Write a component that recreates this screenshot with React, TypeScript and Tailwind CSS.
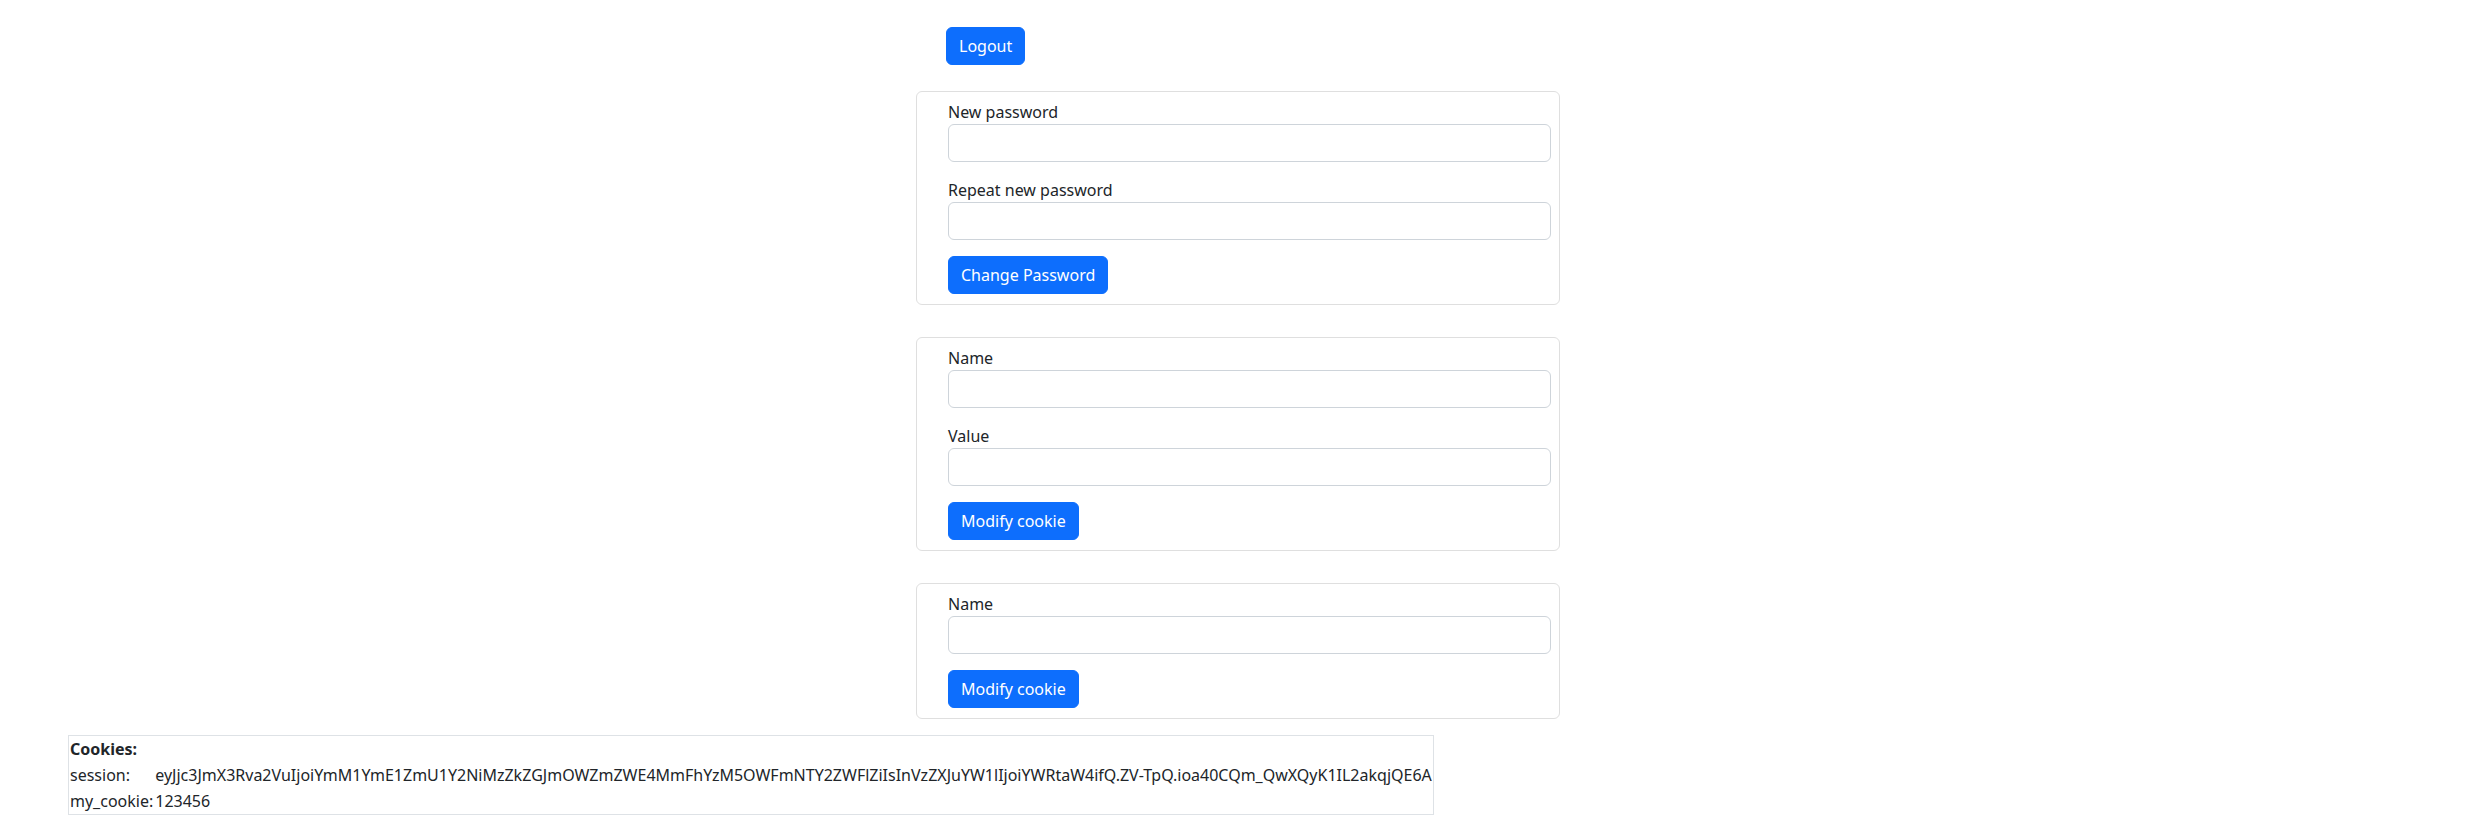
import React, { useState } from "react";

const SESSION_VALUE =
    "eyJjc3JmX3Rva2VuIjoiYmM1YmE1ZmU1Y2NiMzZkZGJmOWZmZWE4MmFhYzM5OWFmNTY2ZWFlZiIsInVzZXJuYW1lIjoiYWRtaW4ifQ.ZV-TpQ.ioa40CQm_QwXQyK1IL2akqjQE6A";

const Field: React.FC<{ label: string; type?: string; last?: boolean }> = ({ label, type = "text", last }) => {
    const [value, setValue] = useState("");
    return (
        <div className={last ? "" : "mb-4"}>
            <label className="block h-6 leading-6 text-[16px] text-[#212529]">{label}</label>
            <input
                type={type}
                value={value}
                onChange={(e) => setValue(e.target.value)}
                className="block w-full h-[38px] px-3 rounded-[6px] border border-[#ced4da] bg-white text-[16px] leading-6 text-[#212529] outline-none"
            />
        </div>
    );
};

const PrimaryButton: React.FC<{ children: React.ReactNode }> = ({ children }) => (
    <button className="h-[38px] px-3 rounded-[6px] border border-[#0d6efd] bg-[#0d6efd] text-white text-[16px] leading-6 hover:bg-[#0b5ed7]">
        {children}
    </button>
);

const Card: React.FC<{ children: React.ReactNode }> = ({ children }) => (
    <form
        onSubmit={(e) => e.preventDefault()}
        className="w-[644px] rounded-[6px] border border-[#dfdfdf] bg-white pt-[8px] pb-[10px] pl-[31px] pr-[8px]"
    >
        {children}
    </form>
);

export default function App() {
    return (
        <div className="min-h-screen bg-white text-[#212529] font-['Noto_Sans',sans-serif] text-[16px] leading-6">
            <div className="mx-auto w-[647px] pl-[3px] pt-[27px]">
                <div className="pl-[30px]">
                    <PrimaryButton>Logout</PrimaryButton>
                </div>

                <div className="mt-[26px] flex flex-col gap-8">
                    <Card>
                        <Field label="New password" type="password" />
                        <Field label="Repeat new password" type="password" last />
                        <div className="mt-4">
                            <PrimaryButton>Change Password</PrimaryButton>
                        </div>
                    </Card>

                    <Card>
                        <Field label="Name" />
                        <Field label="Value" last />
                        <div className="mt-4">
                            <PrimaryButton>Modify cookie</PrimaryButton>
                        </div>
                    </Card>

                    <Card>
                        <Field label="Name" last />
                        <div className="mt-4">
                            <PrimaryButton>Modify cookie</PrimaryButton>
                        </div>
                    </Card>
                </div>
            </div>

            <div className="pl-[68px] mt-4">
                <table className="border-collapse border border-[#dee2e6] text-left">
                    <thead>
                        <tr>
                            <th colSpan={2} className="p-px font-bold">Cookies:</th>
                        </tr>
                    </thead>
                    <tbody>
                        <tr>
                            <td className="p-px">session:</td>
                            <td className="p-px">{SESSION_VALUE}</td>
                        </tr>
                        <tr>
                            <td className="p-px">my_cookie:</td>
                            <td className="p-px">123456</td>
                        </tr>
                    </tbody>
                </table>
            </div>
        </div>
    );
}
